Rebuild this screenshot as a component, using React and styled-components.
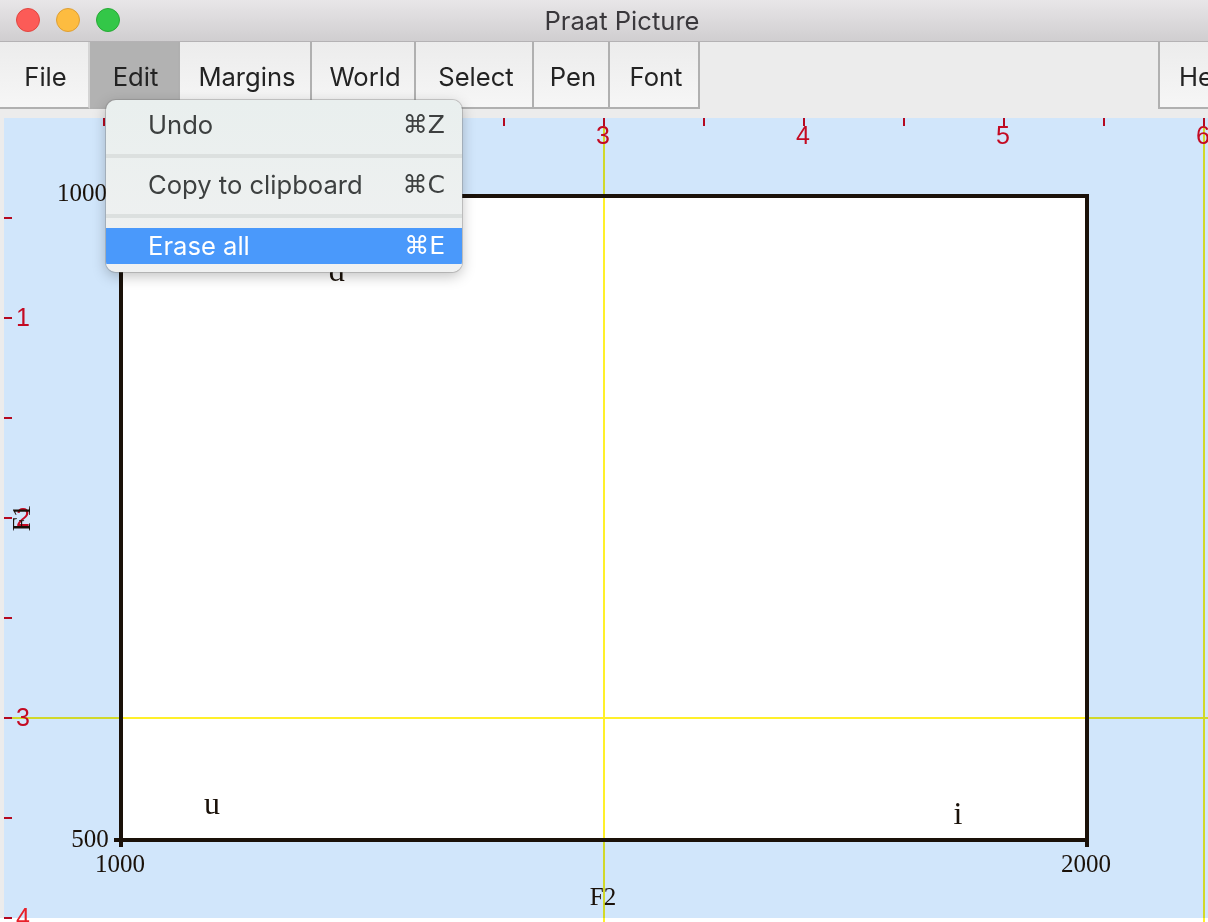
import React from "react";
import styled, { createGlobalStyle } from "styled-components";

const Global = createGlobalStyle`
  html, body {
    margin: 0;
    padding: 0;
    background: #ffffff;
    overflow: hidden;
  }
  #root {
    height: 922px;
  }
`;

const Win = styled.div`
  width: 1208px;
  height: 922px;
  display: flex;
  flex-direction: column;
  overflow: hidden;
  position: relative;
  font-family: Inter, "Liberation Sans", Arial, sans-serif;
`;

const TitleBar = styled.div`
  height: 41px;
  flex: none;
  position: relative;
  display: flex;
  align-items: center;
  justify-content: center;
  background: linear-gradient(#e8e6e8, #d0ced0);
  border-bottom: 1px solid #b4b2b4;
`;

const Lights = styled.div`
  position: absolute;
  left: 16px;
  top: 8px;
  display: flex;
  gap: 16px;
`;

const Light = styled.span`
  width: 24px;
  height: 24px;
  box-sizing: border-box;
  border-radius: 50%;
  background: ${(p) => p.$color};
  border: 1px solid ${(p) => p.$edge};
`;

const Title = styled.div`
  font-size: 25.6px;
  color: #3a383c;
  margin-left: 36px;
`;

const Toolbar = styled.div`
  height: 76px;
  flex: none;
  display: flex;
  align-items: flex-start;
  background: #ececec;
`;

const MenuButton = styled.div`
  height: 67px;
  width: ${(p) => p.$w}px;
  flex: none;
  box-sizing: border-box;
  display: flex;
  align-items: center;
  justify-content: center;
  font-size: 25.6px;
  padding: 3px 0 0 ${(p) => p.$pad ?? 4}px;
  color: #232323;
  background: ${(p) =>
    p.$active ? "#b2b2b2" : "linear-gradient(#ececec, #f6f6f6)"};
  border-right: 2px solid ${(p) => p.$edge || "#b0b0b0"};
  border-bottom: 2px solid #b0b0b0;
`;

const HelpButton = styled(MenuButton)`
  margin-left: auto;
  width: 50px;
  border-right: none;
  border-left: 2px solid #b0b0b0;
  justify-content: flex-start;
  padding-left: 19px;
`;

const CanvasPane = styled.div`
  flex: none;
  height: 800px;
  padding-left: 4px;
  background: #ececec;
`;

const Canvas = styled.div`
  height: 100%;
  position: relative;
  background: #d1e6fb;
`;

const Plot = styled.svg`
  position: absolute;
  left: -4px;
  top: -118px;
  overflow: visible;
`;

const GridLines = styled.path`
  mix-blend-mode: multiply;
`;

const Footer = styled.div`
  flex: 1;
  background: #ffffff;
`;

const Menu = styled.div`
  position: absolute;
  left: 106px;
  top: 100px;
  width: 356px;
  height: 172px;
  box-sizing: border-box;
  padding-top: 7px;
  border-radius: 10px;
  overflow: hidden;
  background: linear-gradient(#e9efee, #f0f1f1);
  box-shadow: 0 0 0 1px rgba(120, 120, 120, 0.35), 0 4px 14px rgba(0, 0, 0, 0.25);
`;

const Item = styled.div`
  height: 36px;
  display: flex;
  align-items: center;
  justify-content: space-between;
  padding: 0 17px 2px 42px;
  box-sizing: border-box;
  font-size: 25.6px;
  color: ${(p) => (p.$selected ? "#ffffff" : "#3d4040")};
  background: ${(p) => (p.$selected ? "#4a99fb" : "transparent")};
`;

const Divider = styled.div`
  height: 4px;
  margin: 11px 0 9px;
  background: #dce0df;
`;

const LastDivider = styled(Divider)`
  margin-bottom: 10px;
`;

const Shortcut = styled.span`
  display: flex;
  align-items: center;
  font-family: "DejaVu Sans", "Liberation Sans", sans-serif;
  font-size: 25px;
`;

const SerifText = styled.text`
  font-family: "Liberation Serif", "Times New Roman", serif;
  font-size: ${(p) => p.$size || 25}px;
  fill: #1a1109;
`;

const RulerText = styled.text`
  font-family: "Liberation Sans", Arial, sans-serif;
  font-size: 25px;
  fill: ${(p) => p.$color || "#c40a22"};
`;

const buttons = [
  { label: "File", w: 90, edge: "#d4d4d4", pad: 3 },
  { label: "Edit", w: 90, active: true, pad: 3 },
  { label: "Margins", w: 132 },
  { label: "World", w: 104 },
  { label: "Select", w: 118 },
  { label: "Pen", w: 76 },
  { label: "Font", w: 90 },
];

const hTicks = [104, 204, 304, 404, 504, 604, 704, 804, 904, 1004, 1104, 1204];
const vTicks = [218, 318, 418, 518, 618, 718, 818, 918];

function Drawing() {
  const ink = "#1a1109";
  return (
    <Plot width="1208" height="922" viewBox="0 0 1208 922">
      <rect x="121" y="196" width="966" height="644" fill="#ffffff" />
      <GridLines d="M604 118V922M1204 118V922M12 718H1208" stroke="#fff02a" strokeWidth="2" fill="none" />

      {hTicks.map((x) => (
        <rect key={x} x={x - 1} y="118" width="2" height="8" fill="#b5091f" />
      ))}
      {vTicks.map((y) => (
        <rect key={y} x="4" y={y - 1} width="8" height="2" fill="#b5091f" />
      ))}

      <RulerText x="603" y="144" textAnchor="middle">3</RulerText>
      <RulerText x="803" y="144" textAnchor="middle">4</RulerText>
      <RulerText x="1003" y="144" textAnchor="middle">5</RulerText>
      <RulerText x="1203" y="144" textAnchor="middle">6</RulerText>
      <RulerText x="23" y="326" textAnchor="middle">1</RulerText>
      <RulerText x="23" y="526" textAnchor="middle">2</RulerText>
      <RulerText x="23" y="726" textAnchor="middle">3</RulerText>
      <RulerText x="23" y="926" textAnchor="middle" $color="#e8202a">4</RulerText>

      <rect x="119" y="194" width="4" height="648" fill={ink} />
      <rect x="1085" y="194" width="4" height="648" fill={ink} />
      <rect x="119" y="194" width="970" height="4" fill={ink} />
      <rect x="119" y="838" width="970" height="4" fill={ink} />
      <rect x="114" y="838" width="6" height="4" fill={ink} />
      <rect x="119" y="840" width="4" height="7" fill={ink} />
      <rect x="1085" y="840" width="4" height="7" fill={ink} />

      <SerifText x="82" y="201" textAnchor="middle">1000</SerifText>
      <SerifText x="90" y="847" textAnchor="middle">500</SerifText>
      <SerifText x="120" y="872" textAnchor="middle">1000</SerifText>
      <SerifText x="1086" y="872" textAnchor="middle">2000</SerifText>
      <SerifText x="603" y="905" textAnchor="middle">F2</SerifText>
      <SerifText transform="translate(30 518) rotate(-90)" textAnchor="middle">F1</SerifText>

      <SerifText x="337" y="281" textAnchor="middle" $size={32}>ɑ</SerifText>
      <SerifText x="212" y="814" textAnchor="middle" $size={32}>u</SerifText>
      <SerifText x="958" y="824" textAnchor="middle" $size={32}>i</SerifText>
    </Plot>
  );
}

export default function App() {
  return (
    <Win>
      <Global />
      <TitleBar>
        <Lights>
          <Light $color="#fc5b57" $edge="#e14640" />
          <Light $color="#fdbc40" $edge="#de9f34" />
          <Light $color="#33c748" $edge="#27aa35" />
        </Lights>
        <Title>Praat Picture</Title>
      </TitleBar>
      <Toolbar>
        {buttons.map((b) => (
          <MenuButton key={b.label} $w={b.w} $active={b.active} $edge={b.edge} $pad={b.pad}>
            {b.label}
          </MenuButton>
        ))}
        <HelpButton>Help</HelpButton>
      </Toolbar>
      <CanvasPane>
        <Canvas>
          <Drawing />
        </Canvas>
      </CanvasPane>
      <Footer />
      <Menu>
        <Item>
          <span>Undo</span>
          <Shortcut>⌘Z</Shortcut>
        </Item>
        <Divider />
        <Item>
          <span>Copy to clipboard</span>
          <Shortcut>⌘C</Shortcut>
        </Item>
        <LastDivider />
        <Item $selected>
          <span>Erase all</span>
          <Shortcut>⌘E</Shortcut>
        </Item>
      </Menu>
    </Win>
  );
}
